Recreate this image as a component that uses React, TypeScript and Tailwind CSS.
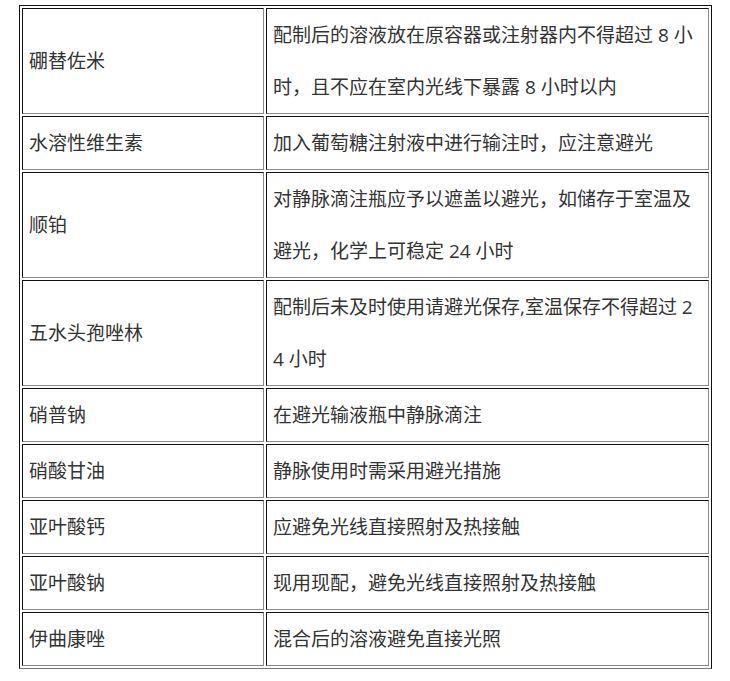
const ROWS: { name: string; note: string }[] = [
  { name: "硼替佐米", note: "配制后的溶液放在原容器或注射器内不得超过 8 小时，且不应在室内光线下暴露 8 小时以内" },
  { name: "水溶性维生素", note: "加入葡萄糖注射液中进行输注时，应注意避光" },
  { name: "顺铂", note: "对静脉滴注瓶应予以遮盖以避光，如储存于室温及避光，化学上可稳定 24 小时" },
  { name: "五水头孢唑林", note: "配制后未及时使用请避光保存,室温保存不得超过 24 小时" },
  { name: "硝普钠", note: "在避光输液瓶中静脉滴注" },
  { name: "硝酸甘油", note: "静脉使用时需采用避光措施" },
  { name: "亚叶酸钙", note: "应避免光线直接照射及热接触" },
  { name: "亚叶酸钠", note: "现用现配，避免光线直接照射及热接触" },
  { name: "伊曲康唑", note: "混合后的溶液避免直接光照" },
];

const cell =
  "border border-t-[#111] border-l-[#111] border-b-[#8a8a8a] border-r-[#8a8a8a] px-[6px] py-0 align-middle";

export default function App() {
  return (
    <div
      className="min-h-[681px] bg-white pl-[19px] pt-[5px] text-[19px] leading-[52px] text-[#333]"
      style={{ fontFamily: '"Open Sans", "Noto Sans CJK SC", sans-serif' }}
    >
      <table className="w-[693px] table-fixed border-separate border-spacing-[2px] border border-t-[#111] border-l-[#111] border-r-[#111] border-b-[#7a7a7a]">
        <tbody>
          {ROWS.map((row) => (
            <tr key={row.name}>
              <td className={`${cell} w-[242px]`}>{row.name}</td>
              <td className={`${cell} break-all`}>{row.note}</td>
            </tr>
          ))}
        </tbody>
      </table>
    </div>
  );
}
